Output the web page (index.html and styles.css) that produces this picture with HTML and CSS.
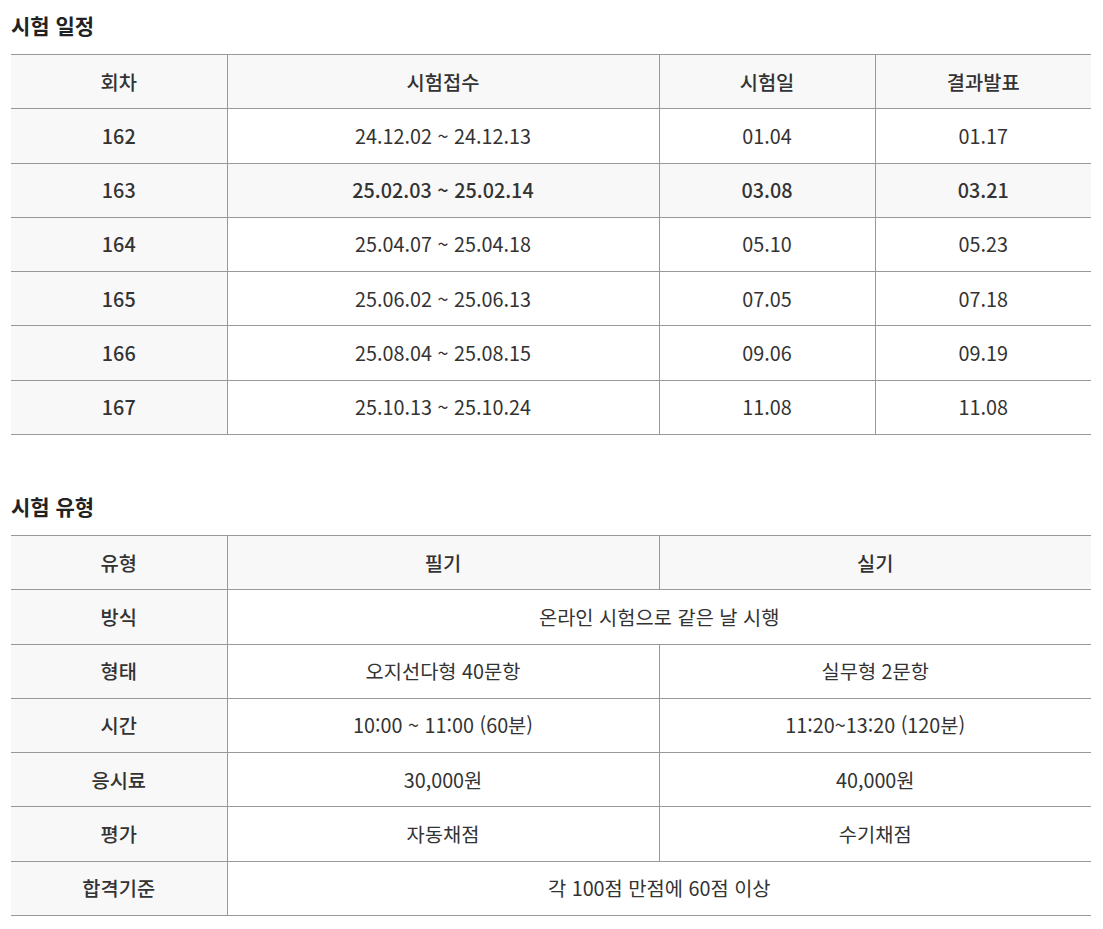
FILE: index.html
```html
<!DOCTYPE html>
<html lang="ko">
<head>
<meta charset="utf-8">
<link rel="stylesheet" href="styles.css">
</head>
<body>
<div class="page">
  <section class="section">
    <h2 class="title">시험 일정</h2>
    <table class="tbl">
      <colgroup><col class="c20"><col class="c40"><col class="c20"><col class="c20"></colgroup>
      <thead>
        <tr><th>회차</th><th>시험접수</th><th>시험일</th><th>결과발표</th></tr>
      </thead>
      <tbody>
        <tr><th>162</th><td>24.12.02 ~ 24.12.13</td><td>01.04</td><td>01.17</td></tr>
        <tr class="hl"><th>163</th><td>25.02.03 ~ 25.02.14</td><td>03.08</td><td>03.21</td></tr>
        <tr><th>164</th><td>25.04.07 ~ 25.04.18</td><td>05.10</td><td>05.23</td></tr>
        <tr><th>165</th><td>25.06.02 ~ 25.06.13</td><td>07.05</td><td>07.18</td></tr>
        <tr><th>166</th><td>25.08.04 ~ 25.08.15</td><td>09.06</td><td>09.19</td></tr>
        <tr><th>167</th><td>25.10.13 ~ 25.10.24</td><td>11.08</td><td>11.08</td></tr>
      </tbody>
    </table>
  </section>
  <section class="section second">
    <h2 class="title">시험 유형</h2>
    <table class="tbl">
      <colgroup><col class="c20"><col class="c40"><col class="c40"></colgroup>
      <thead>
        <tr><th>유형</th><th>필기</th><th>실기</th></tr>
      </thead>
      <tbody>
        <tr><th>방식</th><td colspan="2">온라인 시험으로 같은 날 시행</td></tr>
        <tr><th>형태</th><td>오지선다형 40문항</td><td>실무형 2문항</td></tr>
        <tr><th>시간</th><td>10:00 ~ 11:00 (60분)</td><td>11:20~13:20 (120분)</td></tr>
        <tr><th>응시료</th><td>30,000원</td><td>40,000원</td></tr>
        <tr><th>평가</th><td>자동채점</td><td>수기채점</td></tr>
        <tr><th>합격기준</th><td colspan="2">각 100점 만점에 60점 이상</td></tr>
      </tbody>
    </table>
  </section>
</div>
</body>
</html>
```
FILE: styles.css
```css
html, body {
  margin: 0;
  padding: 0;
  background: #fff;
}
body {
  font-family: "Noto Sans CJK KR", "Noto Sans", sans-serif;
  color: #333;
}
.page {
  padding: 10px 12px 0 11px;
}
.section {
  margin: 0;
}
.section.second {
  margin-top: 56px;
}
.title {
  margin: 0 0 14px;
  font-size: 21px;
  line-height: 30px;
  font-weight: 700;
  color: #222;
}
.tbl {
  width: 1080px;
  border-collapse: collapse;
  table-layout: fixed;
  border-top: 1px solid #999;
  border-bottom: 1px solid #999;
}
.c20 { width: 20%; }
.c40 { width: 40%; }
.tbl th,
.tbl td {
  border-top: 1px solid #999;
  border-left: 1px solid #999;
  padding: 14.65px 10px;
  font-size: 19.8px;
  line-height: 24px;
  text-align: center;
  font-weight: 400;
}
.tbl th:first-child {
  border-left: none;
}
.tbl th {
  background: #f8f8f8;
  font-family: "Noto Sans CJK KR Medium", "Noto Sans CJK KR", sans-serif;
  font-weight: 500;
}
.tbl td {
  background: #fff;
}
.tbl tr.hl td {
  background: #f8f8f8;
  font-family: "Noto Sans CJK KR Medium", "Noto Sans CJK KR", sans-serif;
  font-weight: 500;
}
```
